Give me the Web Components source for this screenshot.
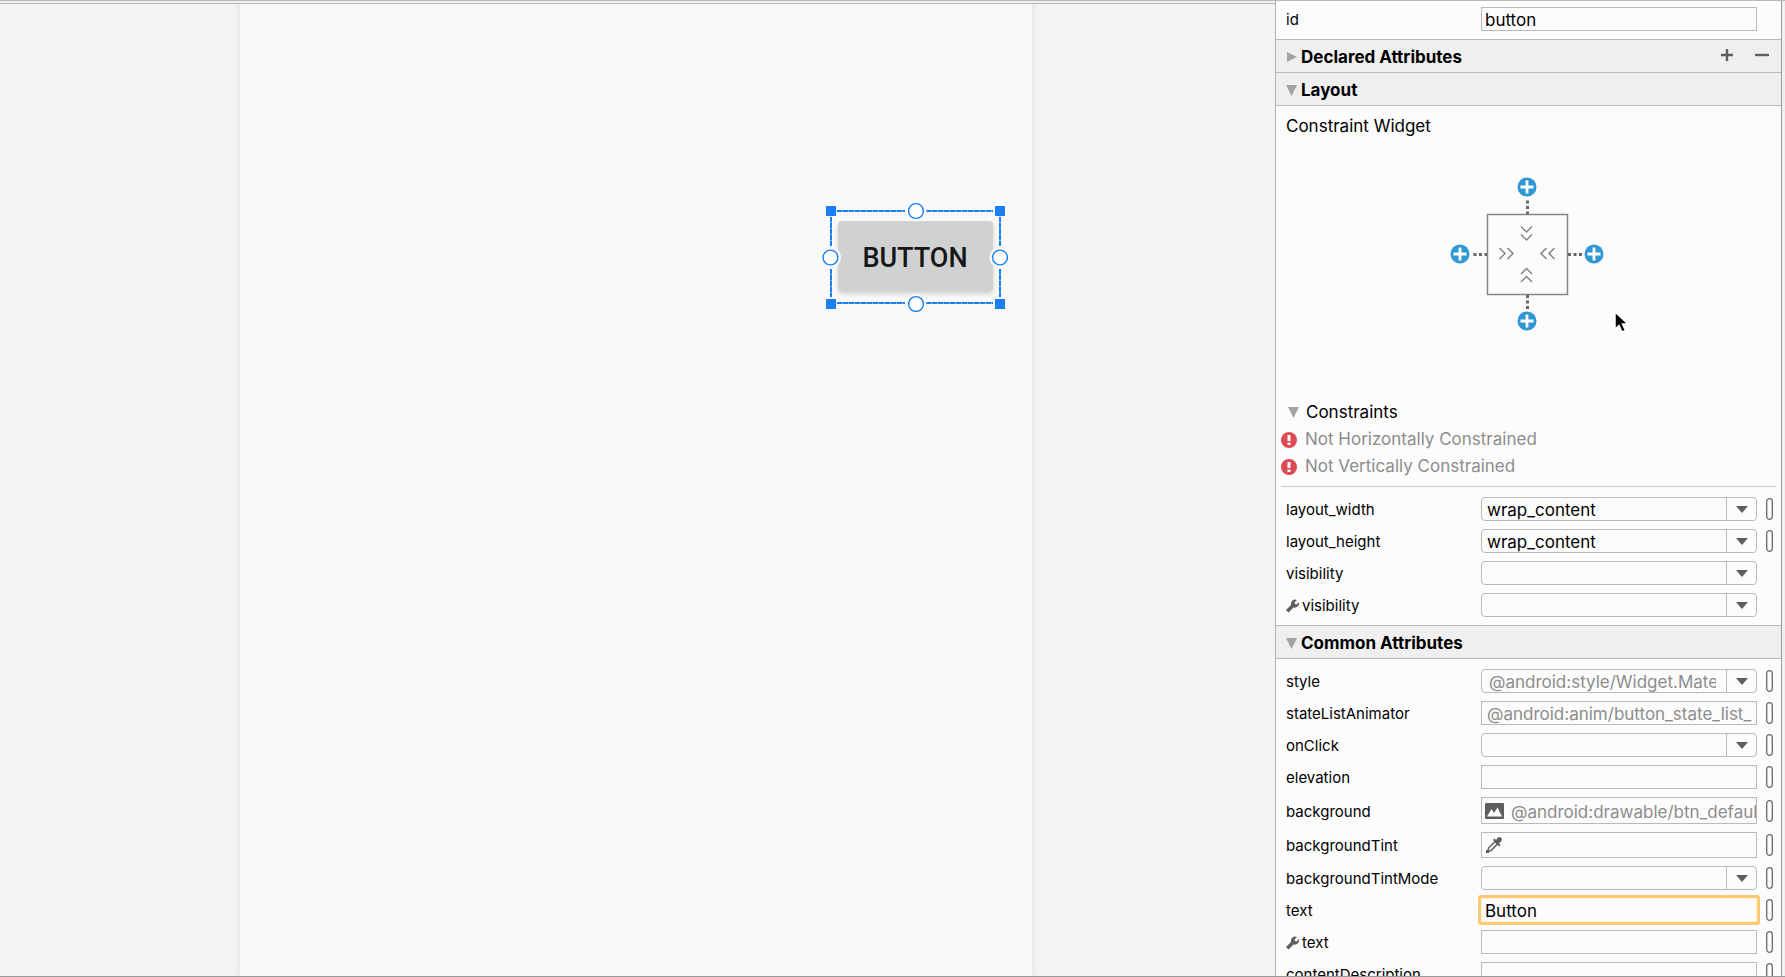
<!DOCTYPE html>
<html lang="en">
<head>
<meta charset="utf-8">
<title>Layout Editor</title>
<style>
	html, body {
		margin: 0;
		height: 100%;
	}

	body {
		font-family: Inter, "Liberation Sans", sans-serif;
		font-size: 17px;
		color: #000;
		--line: #b9b9b9;
		--muted: #8c8c8c;
		--panel: #fcfcfc;
	}
</style>
</head>
<body>
<layout-editor>
	<design-surface slot="canvas">
		<selected-widget>BUTTON</selected-widget>
	</design-surface>
	<attributes-panel slot="panel">
		<attribute-list class="top">
			<attribute-row label="id" value="button" no-flag></attribute-row>
		</attribute-list>
		<panel-section heading="Declared Attributes" collapsed editable></panel-section>
		<panel-section heading="Layout">
			<constraint-widget></constraint-widget>
			<constraint-list>
				<constraint-error>Not Horizontally Constrained</constraint-error>
				<constraint-error>Not Vertically Constrained</constraint-error>
			</constraint-list>
			<attribute-list>
				<attribute-row label="layout_width" kind="select" value="wrap_content"></attribute-row>
				<attribute-row label="layout_height" kind="select" value="wrap_content"></attribute-row>
				<attribute-row label="visibility" kind="select" no-flag></attribute-row>
				<attribute-row label="visibility" kind="select" tools no-flag></attribute-row>
			</attribute-list>
		</panel-section>
		<panel-section heading="Common Attributes">
			<attribute-list>
				<attribute-row label="style" kind="select" hint="@android:style/Widget.Material.Button"></attribute-row>
				<attribute-row label="stateListAnimator" hint="@android:anim/button_state_list_"></attribute-row>
				<attribute-row label="onClick" kind="select"></attribute-row>
				<attribute-row label="elevation"></attribute-row>
				<attribute-row label="background" kind="image" hint="@android:drawable/btn_default_material"></attribute-row>
				<attribute-row label="backgroundTint" kind="color"></attribute-row>
				<attribute-row label="backgroundTintMode" kind="select"></attribute-row>
				<attribute-row label="text" value="Button" active></attribute-row>
				<attribute-row label="text" tools></attribute-row>
				<attribute-row label="contentDescription"></attribute-row>
			</attribute-list>
		</panel-section>
	</attributes-panel>
</layout-editor>

<script>
	class LayoutEditor extends HTMLElement {
		constructor() {
			super();
			this.attachShadow({ mode: 'open' });
			this.shadowRoot.innerHTML = `
				<style>
					:host {
						display: grid;
						grid-template-columns: minmax(0, 1fr) 510px;
						height: 100vh;
						box-sizing: border-box;
						overflow: hidden;
						border-top: 1px solid var(--line);
						border-bottom: 1px solid #9a9a9a;
						background: #f0f0f0;
					}
				</style>
				<slot name="canvas"></slot>
				<slot name="panel"></slot>
			`;
		}
	}

	class DesignSurface extends HTMLElement {
		constructor() {
			super();
			this.attachShadow({ mode: 'open' });
			this.shadowRoot.innerHTML = `
				<style>
					:host {
						display: flex;
						margin-top: 2px;
						padding: 0 243px 0 240px;
						border-top: 1px solid var(--line);
						background: #f4f4f4;
					}

					.sheet {
						position: relative;
						flex: 1;
						background: #f9f9f9;
						box-shadow: 0 0 7px 1px rgba(0, 0, 0, 0.09);
						clip-path: inset(0 -8px);
					}

					/* widgets are placed freely on the sheet */
					::slotted(*) {
						position: absolute;
						left: 582px;
						top: 198px;
					}
				</style>
				<div class="sheet"><slot></slot></div>
			`;
		}
	}

	class SelectedWidget extends HTMLElement {
		constructor() {
			super();
			this.attachShadow({ mode: 'open' });
			this.shadowRoot.innerHTML = `
				<style>
					:host {
						display: grid;
						place-items: center;
						width: 186px;
						height: 110px;
					}

					button, svg {
						grid-area: 1 / 1;
					}

					button {
						width: 155px;
						height: 70px;
						margin-bottom: 2px;
						padding: 4px 0 0;
						border: 0;
						border-radius: 4px;
						background: #d0d2d1;
						box-shadow: 0 3px 5px rgba(0, 0, 0, 0.16);
						font: 500 27px Roboto, sans-serif;
						color: #161616;
					}

					svg {
						pointer-events: none;
					}
				</style>
				<button type="button"><slot></slot></button>
				<svg width="186" height="110" fill="none" stroke="#1a7ef5">
					<g stroke-width="2">
						<path d="M15 9H83M104 9H171M15 101H83M104 101H171M9 15V44M9 67V95M178 15V44M178 67V95" stroke="#7db4f7"/>
						<path d="M15 9H83M104 9H171M15 101H83M104 101H171M9 15V44M9 67V95M178 15V44M178 67V95" stroke-dasharray="5 1"/>
					</g>
					<path d="M4 4h10v10H4zM173 4h10v10h-10zM4 97h10v10H4zM173 97h10v10h-10z" fill="#1a7ef5" stroke="none"/>
					<g fill="#fff" stroke="#f9f9f9" stroke-width="5">
						<circle cx="94" cy="9" r="8"/>
						<circle cx="94" cy="102" r="8"/>
						<circle cx="8.5" cy="55.5" r="8"/>
						<circle cx="178" cy="55.5" r="8"/>
					</g>
					<g fill="#fff" stroke-width="1.4">
						<circle cx="94" cy="9" r="7.4"/>
						<circle cx="94" cy="102" r="7.4"/>
						<circle cx="8.5" cy="55.5" r="7.4"/>
						<circle cx="178" cy="55.5" r="7.4"/>
					</g>
				</svg>
			`;
		}
	}

	class AttributesPanel extends HTMLElement {
		constructor() {
			super();
			this.attachShadow({ mode: 'open' });
			this.shadowRoot.innerHTML = `
				<style>
					:host {
						display: block;
						margin-right: 3px;
						border-left: 1px solid #b0b0b0;
						border-right: 1px solid #999;
						background: var(--panel);
						overflow: hidden;
					}

					::slotted(.top) {
						padding: 6px 0 8px;
					}
				</style>
				<slot></slot>
			`;
		}
	}

	class PanelSection extends HTMLElement {
		constructor() {
			super();
			this.attachShadow({ mode: 'open' });
			const collapsed = this.hasAttribute('collapsed');
			const arrow = collapsed ? 'M2 1L12 6L2 11Z' : 'M1 1H12L6.5 12Z';
			const actions = this.hasAttribute('editable') ? `
				<button type="button" aria-label="Add attribute">
					<svg width="14" height="14"><path d="M7 1V13M1 7H13" stroke="#5e5e5e" stroke-width="2.4"/></svg>
				</button>
				<button type="button" aria-label="Remove attribute">
					<svg width="14" height="14"><path d="M0 7H14" stroke="#5e5e5e" stroke-width="2.4"/></svg>
				</button>
			` : '';
			this.shadowRoot.innerHTML = `
				<style>
					:host {
						display: block;
					}

					header {
						display: flex;
						align-items: center;
						box-sizing: border-box;
						height: 33px;
						padding: 2px 12px 0 9px;
						border-top: 1px solid var(--line);
						background: #efefef;
					}

					.body {
						border-top: 1px solid var(--line);
					}

					h2 {
						flex: 1;
						margin: 0 0 0 3px;
						font-size: 17px;
						line-height: 22px;
					}

					button {
						display: flex;
						margin-left: 21px;
						padding: 0 0 4px;
						border: 0;
						background: none;
					}
				</style>
				<header>
					<svg width="13" height="13"><path d="${arrow}" fill="#a2a2a2"/></svg>
					<h2>${this.getAttribute('heading')}</h2>
					${actions}
				</header>
				${collapsed ? '' : '<div class="body"><slot></slot></div>'}
			`;
		}
	}

	class ConstraintWidget extends HTMLElement {
		constructor() {
			super();
			this.attachShadow({ mode: 'open' });
			const add = (side) => `
				<button type="button" class="${side}" aria-label="Add ${side} constraint">
					<svg width="20" height="20">
						<circle cx="10" cy="10" r="9.5" fill="#2f97d4"/>
						<path d="M10 3.5V16.5M3.5 10H16.5" stroke="#fff" stroke-width="2.8"/>
					</svg>
				</button>
			`;
			this.shadowRoot.innerHTML = `
				<style>
					:host {
						display: block;
						position: relative;
						padding-bottom: 68px;
					}

					h3 {
						margin: 0;
						padding: 8px 10px 39px;
						font-size: 17px;
						font-weight: normal;
						line-height: 24px;
					}

					.widget {
						display: grid;
						grid-template-columns: 20px 114px 20px;
						place-items: center;
						place-content: center;
						padding-right: 3px;
					}

					.widget svg {
						display: block;
					}

					button {
						padding: 0;
						border: 0;
						background: none;
					}

					.top, .bottom {
						grid-column: 2;
					}

					.left {
						grid-column: 1;
					}

					.cursor {
						position: absolute;
						left: 337px;
						top: 205px;
					}
				</style>
				<h3>Constraint Widget</h3>
				<div class="widget">
					${add('top')}
					${add('left')}
					<svg width="114" height="114" fill="none" stroke="#858585" stroke-width="1.5">
						<rect x="17.5" y="17.5" width="80" height="80"/>
						<path d="M57.5 3.5V17M57.5 98V112M3.5 57.5H17M98 57.5H112" stroke="#666" stroke-width="3" stroke-dasharray="3 2.5"/>
						<path d="M51 29.5L56.5 35L62 29.5M51 37.5L56.5 43L62 37.5M51 77L56.5 71.5L62 77M51 85L56.5 79.5L62 85"/>
						<path d="M29.5 51L35 56.5L29.5 62M37.5 51L43 56.5L37.5 62M76.5 51L71 56.5L76.5 62M84.5 51L79 56.5L84.5 62"/>
					</svg>
					${add('right')}
					${add('bottom')}
				</div>
				<svg class="cursor" width="18" height="25">
					<path d="M2 1V18L6 14.5L9 21L12.5 19.5L9.5 13H15Z" stroke="#fff" stroke-width="1.5"/>
				</svg>
			`;
		}
	}

	class ConstraintList extends HTMLElement {
		constructor() {
			super();
			this.attachShadow({ mode: 'open' });
			this.shadowRoot.innerHTML = `
				<style>
					:host {
						display: block;
						margin: 0 5px;
						padding-bottom: 6px;
						border-bottom: 1px solid #c8c8c8;
					}

					h3 {
						display: flex;
						align-items: center;
						gap: 6px;
						margin: 0;
						padding-left: 6px;
						font-size: 17px;
						font-weight: normal;
						line-height: 27px;
					}
				</style>
				<h3>
					<svg width="13" height="13"><path d="M1 1H12L6.5 12Z" fill="#a2a2a2"/></svg>
					Constraints
				</h3>
				<slot></slot>
			`;
		}
	}

	class ConstraintError extends HTMLElement {
		constructor() {
			super();
			this.attachShadow({ mode: 'open' });
			this.shadowRoot.innerHTML = `
				<style>
					:host {
						display: flex;
						align-items: center;
						gap: 8px;
						line-height: 27px;
						color: var(--muted);
					}
				</style>
				<svg width="16" height="16">
					<circle cx="8" cy="8" r="8" fill="#db4b55"/>
					<path d="M6.5 3H9.5V9H6.5ZM6.5 10.5H9.5V13H6.5Z" fill="#fff"/>
				</svg>
				<span><slot></slot></span>
			`;
		}
	}

	class AttributeList extends HTMLElement {
		constructor() {
			super();
			this.attachShadow({ mode: 'open' });
			this.shadowRoot.innerHTML = `
				<style>
					:host {
						display: grid;
						gap: 8px;
						padding: 10px 0 8px;
					}
				</style>
				<slot></slot>
			`;
		}
	}

	class AttributeRow extends HTMLElement {
		constructor() {
			super();
			this.attachShadow({ mode: 'open' });
			const label = this.getAttribute('label');
			const tools = this.hasAttribute('tools');
			this.shadowRoot.innerHTML = `
				<style>
					:host {
						display: grid;
						grid-template-columns: 195px minmax(0, 1fr) 7px;
						align-items: center;
						padding: 0 8px 0 10px;
					}

					label {
						display: flex;
						align-items: center;
						gap: 3px;
						padding-top: 2px;
						font-size: 15px;
						line-height: 20px;
					}

					.field {
						display: flex;
						align-items: center;
						box-sizing: border-box;
						height: 24px;
						margin-right: 9px;
						border: 1px solid var(--line);
						background: var(--panel);
					}

					:host([kind="image"]) .field {
						height: 27px;
					}

					:host([kind="color"]) .field {
						height: 26px;
					}

					:host([active]) .field {
						border-color: #fff3dd;
						box-shadow: 0 0 0 3px #fdca73;
						border-radius: 1px;
					}

					.field > svg {
						flex: none;
						margin-left: 3px;
					}

					input, select {
						flex: 1;
						box-sizing: border-box;
						min-width: 0;
						height: 22px;
						margin: 0;
						padding: 2px 0 0 3px;
						border: 0;
						outline: 0;
						background: none;
						font: inherit;
						color: #000;
					}

					:host([hint]) input {
						padding-left: 5px;
					}

					:host([kind="image"]) input {
						padding-left: 7px;
					}

					input::placeholder {
						color: var(--muted);
						opacity: 1;
					}

					/* drop-down with its arrow in a cell of its own */
					:host([kind="select"]) .field {
						display: grid;
						grid-template-columns: minmax(0, 1fr) 30px;
						border-radius: 4px;
					}

					select {
						grid-area: 1 / 1 / 2 / 3;
						appearance: none;
						padding: 2px 40px 0 5px;
						text-overflow: clip;
					}

					:host([hint]) select {
						padding-left: 7px;
						color: var(--muted);
					}

					.arrow {
						grid-area: 1 / 2;
						display: grid;
						place-items: center;
						height: 22px;
						border-left: 1px solid var(--line);
						pointer-events: none;
					}

					.flag {
						display: flex;
						padding: 0;
						border: 0;
						background: none;
					}
				</style>
				<label for="field">${tools ? this.#wrench() : ''}${label}</label>
				<div class="field">${this.#field()}</div>
				${this.hasAttribute('no-flag') ? '' : `
					<button type="button" class="flag" aria-label="Pick a resource for ${label}">
						<svg width="7" height="22" fill="none" stroke="#6c6c6c" stroke-width="1.3">
							<rect x="0.7" y="0.7" width="5.6" height="20.6" rx="2.8"/>
						</svg>
					</button>
				`}
			`;
		}

		#field() {
			const value = this.getAttribute('value') || '';
			const hint = this.getAttribute('hint') || '';
			const kind = this.getAttribute('kind');
			if (kind === 'select') {
				return `
					<select id="field"><option>${value || hint}</option></select>
					<span class="arrow">
						<svg width="12" height="8"><path d="M0 1H12L6 8Z" fill="#5e5e5e"/></svg>
					</span>
				`;
			}
			let icon = '';
			if (kind === 'image') {
				icon = `
					<svg width="19" height="16">
						<rect width="19" height="16" rx="1" fill="#5e5e5e"/>
						<path d="M2 13.5L6.5 6L9 10L12.5 4.5L17 13.5Z" fill="#fff"/>
					</svg>
				`;
			}
			if (kind === 'color') {
				icon = `
					<svg width="18" height="18">
						<path d="M3 15.5L3.5 12L10 5.5L12.5 8L6 14.5Z" fill="none" stroke="#5e5e5e" stroke-width="1.5"/>
						<path d="M8 4L9.5 2.5L11 4L13 1.5Q15 0.5 16.5 2Q17.5 3.5 16 5.5L14 7.5L15.5 9L14 10.5Z" fill="#5e5e5e"/>
						<path d="M1 14H4V17H1Z" fill="#5e5e5e"/>
					</svg>
				`;
			}
			return `${icon}<input id="field" type="text" value="${value}" placeholder="${hint}">`;
		}

		#wrench() {
			return `
				<svg width="13" height="14">
					<path d="M0 11L5 6Q4.500 3 6.500 1.500Q8.500 0 11 1L8.500 3.500L9 5L10.500 5.500L13 3Q13.500 6 11.500 7.500Q10 9 7.500 8.500L2.500 13.500Z" fill="#5e5e5e"/>
				</svg>
			`;
		}
	}

	customElements.define('layout-editor', LayoutEditor);
	customElements.define('design-surface', DesignSurface);
	customElements.define('selected-widget', SelectedWidget);
	customElements.define('attributes-panel', AttributesPanel);
	customElements.define('panel-section', PanelSection);
	customElements.define('constraint-widget', ConstraintWidget);
	customElements.define('constraint-list', ConstraintList);
	customElements.define('constraint-error', ConstraintError);
	customElements.define('attribute-list', AttributeList);
	customElements.define('attribute-row', AttributeRow);
</script>
</body>
</html>
